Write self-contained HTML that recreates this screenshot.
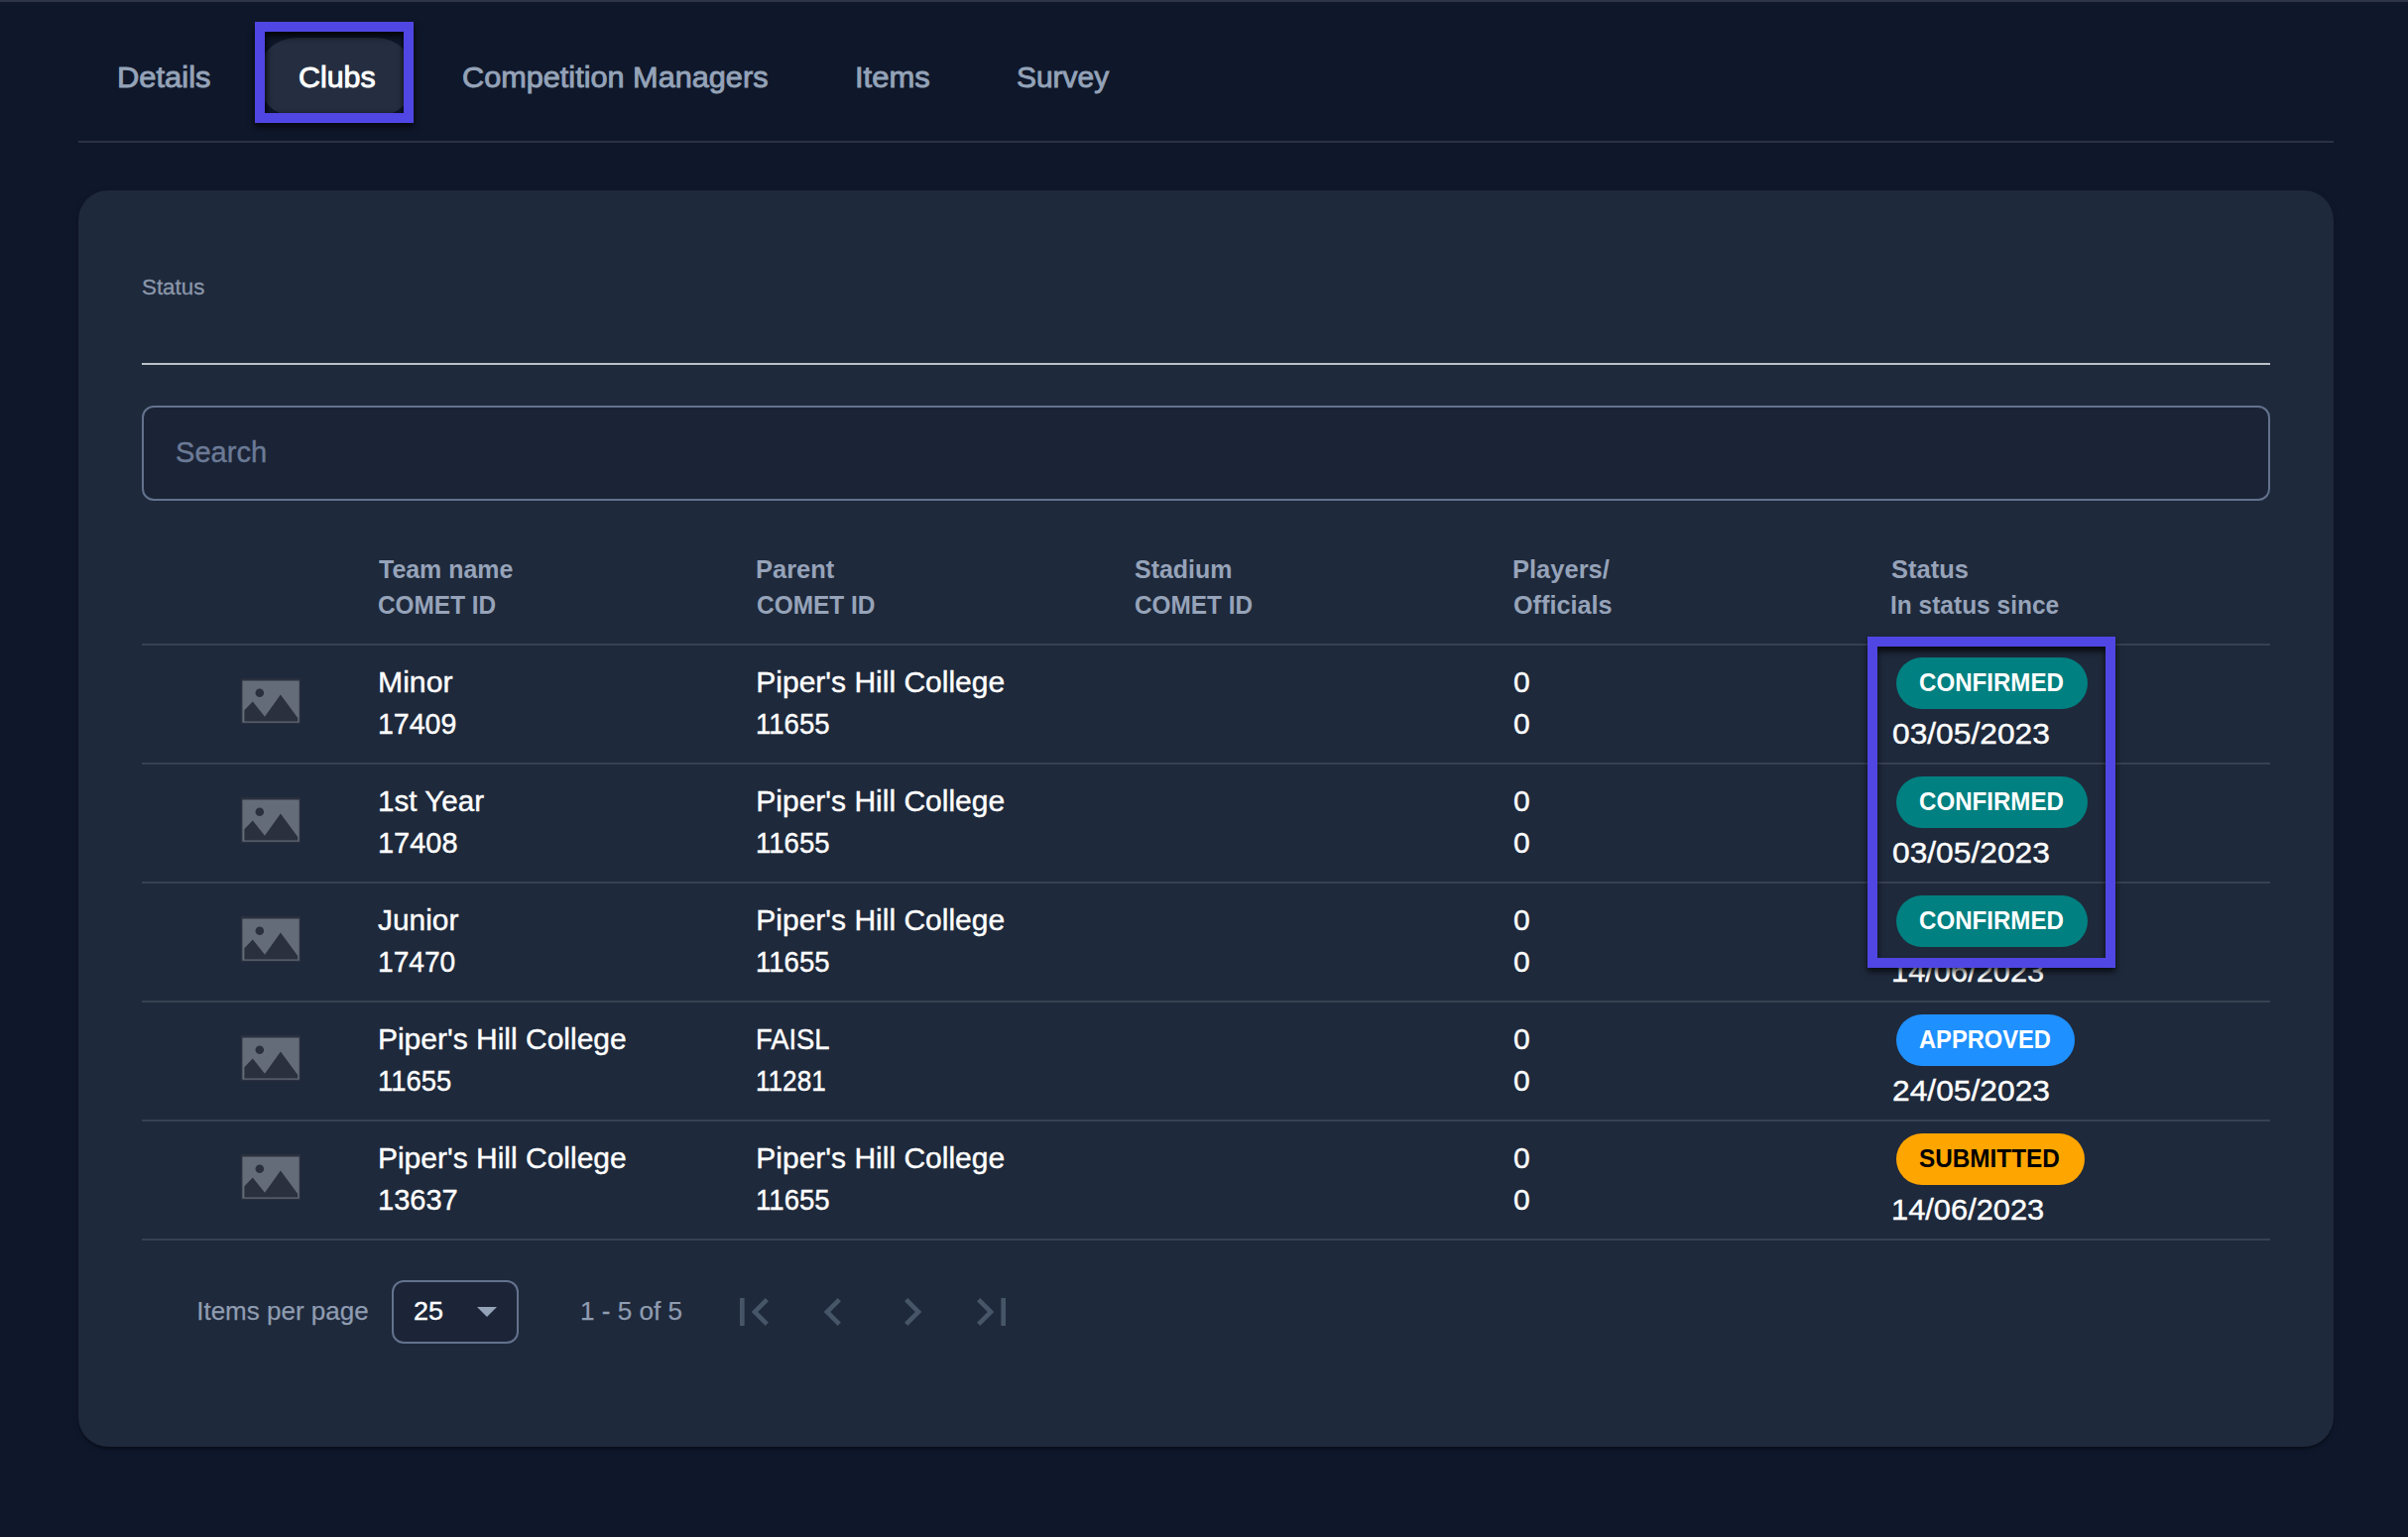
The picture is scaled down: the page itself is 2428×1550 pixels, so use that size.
<!DOCTYPE html>
<html><head><meta charset="utf-8"><style>
html,body{margin:0;padding:0;}
body{width:2428px;height:1550px;background:#0f172a;position:relative;overflow:hidden;font-family:"Liberation Sans",sans-serif;}
.b{position:absolute;display:block;}
.t{position:absolute;white-space:nowrap;transform-origin:0 0;}
</style></head><body>
<div class="b" style="left:0;top:0;width:2428px;height:2px;background:#2e3446"></div>
<div class="b" style="left:257px;top:22px;width:160px;height:102px;overflow:hidden"><div class="b" style="left:2px;top:16px;width:160px;height:80px;border-radius:40px;background:#252e40"></div></div>
<div class="t" style="left:118.24px;top:62.70px;font-size:30px;line-height:30px;color:#94a3b8;font-weight:400;-webkit-text-stroke:0.9px #94a3b8;transform:scaleX(1.0303);">Details</div>
<div class="t" style="left:300.79px;top:62.70px;font-size:30px;line-height:30px;color:#ffffff;font-weight:400;-webkit-text-stroke:0.9px #ffffff;transform:scaleX(1.0120);">Clubs</div>
<div class="t" style="left:466.38px;top:62.70px;font-size:30px;line-height:30px;color:#94a3b8;font-weight:400;-webkit-text-stroke:0.9px #94a3b8;transform:scaleX(1.0220);">Competition Managers</div>
<div class="t" style="left:861.70px;top:62.70px;font-size:30px;line-height:30px;color:#94a3b8;font-weight:400;-webkit-text-stroke:0.9px #94a3b8;transform:scaleX(1.0319);">Items</div>
<div class="t" style="left:1024.60px;top:62.70px;font-size:30px;line-height:30px;color:#94a3b8;font-weight:400;-webkit-text-stroke:0.9px #94a3b8;transform:scaleX(0.9978);">Survey</div>
<div class="b" style="left:79px;top:142px;width:2274px;height:2px;background:#2b3142"></div>
<div class="b" style="left:79px;top:192px;width:2274px;height:1267px;border-radius:30px;background:#1e293b;box-shadow:0 4px 2px -2px rgba(0,0,0,.2),0 2px 2px rgba(0,0,0,.14),0 2px 6px rgba(0,0,0,.12)"></div>
<div class="t" style="left:142.71px;top:278.95px;font-size:22.5px;line-height:22.5px;color:#8b97ab;font-weight:400;-webkit-text-stroke:0.3px #8b97ab;transform:scaleX(0.9937);">Status</div>
<div class="b" style="left:143px;top:366px;width:2146px;height:2px;background:#bcc0c8"></div>
<div class="b" style="left:143px;top:409px;width:2146px;height:96px;box-sizing:border-box;border:2px solid #63728d;border-radius:12px;background:#1b2436"></div>
<div class="t" style="left:177.20px;top:442.35px;font-size:29px;line-height:29px;color:#6b7a96;font-weight:400;-webkit-text-stroke:0.4px #6b7a96;transform:scaleX(1.0034);">Search</div>
<div class="t" style="left:382.00px;top:561.19px;font-size:26px;line-height:26px;color:#96a3b9;font-weight:700;transform:scaleX(0.9589);">Team name</div>
<div class="t" style="left:381.06px;top:597.09px;font-size:26px;line-height:26px;color:#96a3b9;font-weight:700;transform:scaleX(0.9376);">COMET ID</div>
<div class="t" style="left:761.54px;top:561.19px;font-size:26px;line-height:26px;color:#96a3b9;font-weight:700;transform:scaleX(0.9808);">Parent</div>
<div class="t" style="left:762.56px;top:597.09px;font-size:26px;line-height:26px;color:#96a3b9;font-weight:700;transform:scaleX(0.9400);">COMET ID</div>
<div class="t" style="left:1144.04px;top:561.19px;font-size:26px;line-height:26px;color:#96a3b9;font-weight:700;transform:scaleX(0.9600);">Stadium</div>
<div class="t" style="left:1144.06px;top:597.09px;font-size:26px;line-height:26px;color:#96a3b9;font-weight:700;transform:scaleX(0.9360);">COMET ID</div>
<div class="t" style="left:1524.54px;top:561.19px;font-size:26px;line-height:26px;color:#96a3b9;font-weight:700;transform:scaleX(0.9806);">Players/</div>
<div class="t" style="left:1525.53px;top:597.09px;font-size:26px;line-height:26px;color:#96a3b9;font-weight:700;transform:scaleX(0.9700);">Officials</div>
<div class="t" style="left:1907.32px;top:561.19px;font-size:26px;line-height:26px;color:#96a3b9;font-weight:700;transform:scaleX(0.9805);">Status</div>
<div class="t" style="left:1906.42px;top:597.09px;font-size:26px;line-height:26px;color:#96a3b9;font-weight:700;transform:scaleX(0.9421);">In status since</div>
<div class="b" style="left:143px;top:649px;width:2146px;height:2px;background:#374152"></div>
<div class="b" style="left:143px;top:769px;width:2146px;height:2px;background:#374152"></div>
<div class="b" style="left:143px;top:889px;width:2146px;height:2px;background:#374152"></div>
<div class="b" style="left:143px;top:1009px;width:2146px;height:2px;background:#374152"></div>
<div class="b" style="left:143px;top:1129px;width:2146px;height:2px;background:#374152"></div>
<div class="b" style="left:143px;top:1249px;width:2146px;height:2px;background:#374152"></div>
<svg class="b" style="left:242.5px;top:684.3px" width="61" height="47" viewBox="0 0 61 47"><rect x="0" y="0" width="60.1" height="46.2" fill="#2a303d"/><rect x="1.4" y="2.5" width="57.3" height="42.2" fill="#646b79"/><circle cx="18.8" cy="14.7" r="4.3" fill="#2a303e"/><path d="M3.4 32.2 L11.8 23.6 L24 38.8 L39.9 16.5 L57.2 40.1 L57.2 43.5 L3.4 43.5 Z" fill="#2a303e"/></svg>
<div class="t" style="left:381.29px;top:673.31px;font-size:30px;line-height:30px;color:#fff;font-weight:400;-webkit-text-stroke:0.4px #fff;transform:scaleX(1.0068);">Minor</div>
<div class="t" style="left:380.80px;top:715.40px;font-size:30px;line-height:30px;color:#fff;font-weight:400;-webkit-text-stroke:0.4px #fff;transform:scaleX(0.9513);">17409</div>
<div class="t" style="left:762.30px;top:673.31px;font-size:30px;line-height:30px;color:#fff;font-weight:400;-webkit-text-stroke:0.4px #fff;">Piper's Hill College</div>
<div class="t" style="left:762.16px;top:715.40px;font-size:30px;line-height:30px;color:#fff;font-weight:400;-webkit-text-stroke:0.4px #fff;transform:scaleX(0.9190);">11655</div>
<div class="t" style="left:1526.00px;top:673.31px;font-size:30px;line-height:30px;color:#fff;font-weight:400;-webkit-text-stroke:0.4px #fff;">0</div>
<div class="t" style="left:1526.00px;top:715.40px;font-size:30px;line-height:30px;color:#fff;font-weight:400;-webkit-text-stroke:0.4px #fff;">0</div>
<div class="b" style="left:1912px;top:663px;width:193px;height:52px;border-radius:26px;background:#008080"></div>
<div class="t" style="left:1935.34px;top:675.74px;font-size:25px;line-height:25px;color:#fff;font-weight:700;transform:scaleX(0.9638);">CONFIRMED</div>
<div class="t" style="left:1907.64px;top:724.50px;font-size:30px;line-height:30px;color:#fff;font-weight:400;-webkit-text-stroke:0.4px #fff;transform:scaleX(1.0578);">03/05/2023</div>
<svg class="b" style="left:242.5px;top:804.3px" width="61" height="47" viewBox="0 0 61 47"><rect x="0" y="0" width="60.1" height="46.2" fill="#2a303d"/><rect x="1.4" y="2.5" width="57.3" height="42.2" fill="#646b79"/><circle cx="18.8" cy="14.7" r="4.3" fill="#2a303e"/><path d="M3.4 32.2 L11.8 23.6 L24 38.8 L39.9 16.5 L57.2 40.1 L57.2 43.5 L3.4 43.5 Z" fill="#2a303e"/></svg>
<div class="t" style="left:380.53px;top:793.31px;font-size:30px;line-height:30px;color:#fff;font-weight:400;-webkit-text-stroke:0.4px #fff;transform:scaleX(0.9868);">1st Year</div>
<div class="t" style="left:380.57px;top:835.40px;font-size:30px;line-height:30px;color:#fff;font-weight:400;-webkit-text-stroke:0.4px #fff;transform:scaleX(0.9650);">17408</div>
<div class="t" style="left:762.30px;top:793.31px;font-size:30px;line-height:30px;color:#fff;font-weight:400;-webkit-text-stroke:0.4px #fff;">Piper's Hill College</div>
<div class="t" style="left:762.16px;top:835.40px;font-size:30px;line-height:30px;color:#fff;font-weight:400;-webkit-text-stroke:0.4px #fff;transform:scaleX(0.9190);">11655</div>
<div class="t" style="left:1526.00px;top:793.31px;font-size:30px;line-height:30px;color:#fff;font-weight:400;-webkit-text-stroke:0.4px #fff;">0</div>
<div class="t" style="left:1526.00px;top:835.40px;font-size:30px;line-height:30px;color:#fff;font-weight:400;-webkit-text-stroke:0.4px #fff;">0</div>
<div class="b" style="left:1912px;top:783px;width:193px;height:52px;border-radius:26px;background:#008080"></div>
<div class="t" style="left:1935.34px;top:795.74px;font-size:25px;line-height:25px;color:#fff;font-weight:700;transform:scaleX(0.9638);">CONFIRMED</div>
<div class="t" style="left:1907.64px;top:844.50px;font-size:30px;line-height:30px;color:#fff;font-weight:400;-webkit-text-stroke:0.4px #fff;transform:scaleX(1.0578);">03/05/2023</div>
<svg class="b" style="left:242.5px;top:924.3px" width="61" height="47" viewBox="0 0 61 47"><rect x="0" y="0" width="60.1" height="46.2" fill="#2a303d"/><rect x="1.4" y="2.5" width="57.3" height="42.2" fill="#646b79"/><circle cx="18.8" cy="14.7" r="4.3" fill="#2a303e"/><path d="M3.4 32.2 L11.8 23.6 L24 38.8 L39.9 16.5 L57.2 40.1 L57.2 43.5 L3.4 43.5 Z" fill="#2a303e"/></svg>
<div class="t" style="left:381.10px;top:913.31px;font-size:30px;line-height:30px;color:#fff;font-weight:400;-webkit-text-stroke:0.4px #fff;transform:scaleX(0.9963);">Junior</div>
<div class="t" style="left:380.62px;top:955.40px;font-size:30px;line-height:30px;color:#fff;font-weight:400;-webkit-text-stroke:0.4px #fff;transform:scaleX(0.9383);">17470</div>
<div class="t" style="left:762.30px;top:913.31px;font-size:30px;line-height:30px;color:#fff;font-weight:400;-webkit-text-stroke:0.4px #fff;">Piper's Hill College</div>
<div class="t" style="left:762.16px;top:955.40px;font-size:30px;line-height:30px;color:#fff;font-weight:400;-webkit-text-stroke:0.4px #fff;transform:scaleX(0.9190);">11655</div>
<div class="t" style="left:1526.00px;top:913.31px;font-size:30px;line-height:30px;color:#fff;font-weight:400;-webkit-text-stroke:0.4px #fff;">0</div>
<div class="t" style="left:1526.00px;top:955.40px;font-size:30px;line-height:30px;color:#fff;font-weight:400;-webkit-text-stroke:0.4px #fff;">0</div>
<div class="b" style="left:1912px;top:903px;width:193px;height:52px;border-radius:26px;background:#008080"></div>
<div class="t" style="left:1935.34px;top:915.74px;font-size:25px;line-height:25px;color:#fff;font-weight:700;transform:scaleX(0.9638);">CONFIRMED</div>
<div class="t" style="left:1906.95px;top:964.50px;font-size:30px;line-height:30px;color:#fff;font-weight:400;-webkit-text-stroke:0.4px #fff;transform:scaleX(1.0274);">14/06/2023</div>
<svg class="b" style="left:242.5px;top:1044.3px" width="61" height="47" viewBox="0 0 61 47"><rect x="0" y="0" width="60.1" height="46.2" fill="#2a303d"/><rect x="1.4" y="2.5" width="57.3" height="42.2" fill="#646b79"/><circle cx="18.8" cy="14.7" r="4.3" fill="#2a303e"/><path d="M3.4 32.2 L11.8 23.6 L24 38.8 L39.9 16.5 L57.2 40.1 L57.2 43.5 L3.4 43.5 Z" fill="#2a303e"/></svg>
<div class="t" style="left:380.90px;top:1033.31px;font-size:30px;line-height:30px;color:#fff;font-weight:400;-webkit-text-stroke:0.4px #fff;">Piper's Hill College</div>
<div class="t" style="left:381.07px;top:1075.40px;font-size:30px;line-height:30px;color:#fff;font-weight:400;-webkit-text-stroke:0.4px #fff;transform:scaleX(0.9139);">11655</div>
<div class="t" style="left:762.27px;top:1033.31px;font-size:30px;line-height:30px;color:#fff;font-weight:400;-webkit-text-stroke:0.4px #fff;transform:scaleX(0.9127);">FAISL</div>
<div class="t" style="left:762.36px;top:1075.40px;font-size:30px;line-height:30px;color:#fff;font-weight:400;-webkit-text-stroke:0.4px #fff;transform:scaleX(0.8705);">11281</div>
<div class="t" style="left:1526.00px;top:1033.31px;font-size:30px;line-height:30px;color:#fff;font-weight:400;-webkit-text-stroke:0.4px #fff;">0</div>
<div class="t" style="left:1526.00px;top:1075.40px;font-size:30px;line-height:30px;color:#fff;font-weight:400;-webkit-text-stroke:0.4px #fff;">0</div>
<div class="b" style="left:1912px;top:1023px;width:180px;height:52px;border-radius:26px;background:#1e90ff"></div>
<div class="t" style="left:1935.35px;top:1035.74px;font-size:25px;line-height:25px;color:#fff;font-weight:700;transform:scaleX(0.9471);">APPROVED</div>
<div class="t" style="left:1907.64px;top:1084.51px;font-size:30px;line-height:30px;color:#fff;font-weight:400;-webkit-text-stroke:0.4px #fff;transform:scaleX(1.0592);">24/05/2023</div>
<svg class="b" style="left:242.5px;top:1164.3px" width="61" height="47" viewBox="0 0 61 47"><rect x="0" y="0" width="60.1" height="46.2" fill="#2a303d"/><rect x="1.4" y="2.5" width="57.3" height="42.2" fill="#646b79"/><circle cx="18.8" cy="14.7" r="4.3" fill="#2a303e"/><path d="M3.4 32.2 L11.8 23.6 L24 38.8 L39.9 16.5 L57.2 40.1 L57.2 43.5 L3.4 43.5 Z" fill="#2a303e"/></svg>
<div class="t" style="left:380.90px;top:1153.31px;font-size:30px;line-height:30px;color:#fff;font-weight:400;-webkit-text-stroke:0.4px #fff;">Piper's Hill College</div>
<div class="t" style="left:380.96px;top:1195.40px;font-size:30px;line-height:30px;color:#fff;font-weight:400;-webkit-text-stroke:0.4px #fff;transform:scaleX(0.9675);">13637</div>
<div class="t" style="left:762.30px;top:1153.31px;font-size:30px;line-height:30px;color:#fff;font-weight:400;-webkit-text-stroke:0.4px #fff;">Piper's Hill College</div>
<div class="t" style="left:762.26px;top:1195.40px;font-size:30px;line-height:30px;color:#fff;font-weight:400;-webkit-text-stroke:0.4px #fff;transform:scaleX(0.9203);">11655</div>
<div class="t" style="left:1526.00px;top:1153.31px;font-size:30px;line-height:30px;color:#fff;font-weight:400;-webkit-text-stroke:0.4px #fff;">0</div>
<div class="t" style="left:1526.00px;top:1195.40px;font-size:30px;line-height:30px;color:#fff;font-weight:400;-webkit-text-stroke:0.4px #fff;">0</div>
<div class="b" style="left:1912px;top:1143px;width:190px;height:52px;border-radius:26px;background:#ffa500"></div>
<div class="t" style="left:1935.33px;top:1155.74px;font-size:25px;line-height:25px;color:#000;font-weight:700;transform:scaleX(0.9729);">SUBMITTED</div>
<div class="t" style="left:1906.95px;top:1204.51px;font-size:30px;line-height:30px;color:#fff;font-weight:400;-webkit-text-stroke:0.4px #fff;transform:scaleX(1.0274);">14/06/2023</div>
<div class="t" style="left:198.20px;top:1308.99px;font-size:26px;line-height:26px;color:#8f9cb1;font-weight:400;-webkit-text-stroke:0.25px #8f9cb1;">Items per page</div>
<div class="b" style="left:395px;top:1291px;width:128px;height:64px;box-sizing:border-box;border:2px solid #63728d;border-radius:12px;background:#1b2537"></div>
<div class="t" style="left:416.67px;top:1308.99px;font-size:26px;line-height:26px;color:#fff;font-weight:400;-webkit-text-stroke:0.4px #fff;transform:scaleX(1.0346);">25</div>
<svg class="b" style="left:481px;top:1318px" width="20" height="10" viewBox="0 0 20 10"><path d="M0 0H20L10 10Z" fill="#94a3b8"/></svg>
<div class="t" style="left:584.99px;top:1308.99px;font-size:26px;line-height:26px;color:#8f9cb1;font-weight:400;-webkit-text-stroke:0.25px #8f9cb1;transform:scaleX(1.0040);">1 - 5 of 5</div>
<svg class="b" style="left:732px;top:1295px" width="56" height="56" viewBox="0 0 24 24"><path d="M18.41 16.59L13.82 12l4.59-4.59L17 6l-6 6 6 6zM6 6h2v12H6z" fill="#475569"/></svg>
<svg class="b" style="left:812px;top:1295px" width="56" height="56" viewBox="0 0 24 24"><path d="M15.41 7.41L14 6l-6 6 6 6 1.41-1.41L10.83 12z" fill="#475569"/></svg>
<svg class="b" style="left:892px;top:1295px" width="56" height="56" viewBox="0 0 24 24"><path d="M10 6L8.59 7.41 13.17 12l-4.58 4.59L10 18l6-6z" fill="#475569"/></svg>
<svg class="b" style="left:972px;top:1295px" width="56" height="56" viewBox="0 0 24 24"><path d="M5.59 7.41L10.18 12l-4.59 4.59L7 18l6-6-6-6zM16 6h2v12h-2z" fill="#475569"/></svg>
<div class="b" style="left:257px;top:22px;width:160px;height:102px;box-sizing:border-box;border:10px solid #5046e4;box-shadow:0 4px 6px rgba(0,0,0,.7), inset 0 5px 6px rgba(0,0,0,.75), inset 3px 0 4px rgba(0,0,0,.3)"></div>
<div class="b" style="left:1883px;top:642px;width:250px;height:334px;box-sizing:border-box;border:10px solid #5046e4;box-shadow:0 4px 6px rgba(0,0,0,.7), inset 0 5px 6px rgba(0,0,0,.75)"></div>
</body></html>
